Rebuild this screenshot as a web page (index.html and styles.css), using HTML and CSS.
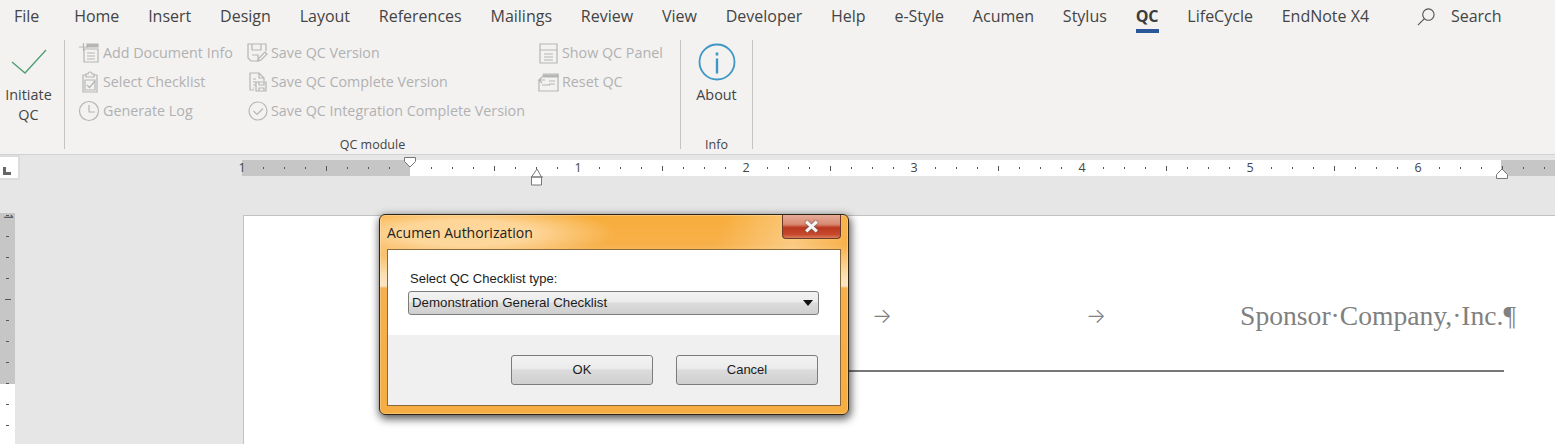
FILE: index.html
```html
<!DOCTYPE html>
<html lang="en">
<head>
<meta charset="utf-8">
<title>QC ribbon</title>
<link rel="stylesheet" href="styles.css">
</head>
<body>
<div class="app">
  <header class="ribbon">
    <nav class="tabs">
      <span class="tab tab-file">File</span>
      <span class="tab">Home</span>
      <span class="tab">Insert</span>
      <span class="tab">Design</span>
      <span class="tab">Layout</span>
      <span class="tab">References</span>
      <span class="tab">Mailings</span>
      <span class="tab">Review</span>
      <span class="tab">View</span>
      <span class="tab">Developer</span>
      <span class="tab">Help</span>
      <span class="tab">e-Style</span>
      <span class="tab">Acumen</span>
      <span class="tab">Stylus</span>
      <span class="tab tab-active">QC</span>
      <span class="tab">LifeCycle</span>
      <span class="tab">EndNote X4</span>
      <span class="search">
        <svg class="search-icon" viewBox="0 0 20 20"><circle cx="12" cy="8" r="6"/><path d="M7.800 12.300 1 19"/></svg>
        <span>Search</span>
      </span>
    </nav>
    <div class="groups">
      <section class="group group-initiate">
        <div class="big-btn">
          <svg class="check-icon" viewBox="0 0 36 26"><path d="M1 13 14 24 35 1"/></svg>
          <span>Initiate<br>QC</span>
        </div>
      </section>
      <section class="group group-module">
        <div class="columns">
          <div class="col col-a">
            <div class="item">
              <svg class="ico" viewBox="0 0 22 22"><path d="M1 5h9M5.500 1v8"/><path class="fill" d="M9 2h11v3H9z"/><path d="M6 7h14v13H6zM9 11h8M9 14h8M9 17h8"/></svg>
              <span>Add Document Info</span>
            </div>
            <div class="item">
              <svg class="ico" viewBox="0 0 22 22"><path d="M8 4H5v17h14V4h-3"/><path d="M8 5V3h2a1.500 1.500 0 0 1 4 0h2v3H8z"/><path d="M7 9h10v10H7zM9 14l2.500 2.500L17 10"/></svg>
              <span>Select Checklist</span>
            </div>
            <div class="item">
              <svg class="ico" viewBox="0 0 22 22"><circle cx="11" cy="11" r="9.500"/><path d="M11 5v7h6"/></svg>
              <span>Generate Log</span>
            </div>
          </div>
          <div class="col col-b">
            <div class="item">
              <svg class="ico" viewBox="0 0 22 22"><path d="M12 19H5l-3-3V2h18v7"/><path d="M6 2v6h9V2M6 13h6v6"/><path d="M12 19l1-3 6-6 2 2-6 6z"/></svg>
              <span>Save QC Version</span>
            </div>
            <div class="item">
              <svg class="ico" viewBox="0 0 22 22"><path d="M8 19H4V2h9l5 5v3"/><path d="M13 2v5h5"/><path d="M7 8h3M7 11h3M7 14h3M7 17h1"/><path d="M10 11h10v9H10zM13 11v3h5v-3M13 20v-3h5v3"/></svg>
              <span>Save QC Complete Version</span>
            </div>
            <div class="item">
              <svg class="ico" viewBox="0 0 22 22"><circle cx="12" cy="11" r="9"/><path d="M7.500 11l3.500 3.500 6-6"/></svg>
              <span>Save QC Integration Complete Version</span>
            </div>
          </div>
          <div class="col col-c">
            <div class="item">
              <svg class="ico" viewBox="0 0 22 22"><path d="M3 2h17v19H3zM3 8h17M7 12h9M7 15h9M7 18h9"/></svg>
              <span>Show QC Panel</span>
            </div>
            <div class="item">
              <svg class="ico" viewBox="0 0 22 22"><path d="M6 3h15v17H2V9"/><path class="fill" d="M6 4h15v2H6z"/><path d="M12 10h6M12 13h6M5 14h8M8 9H2l3-3M2 9l3 3"/></svg>
              <span>Reset QC</span>
            </div>
          </div>
        </div>
        <div class="group-label">QC module</div>
      </section>
      <section class="group group-info">
        <div class="big-btn">
          <svg class="info-icon" viewBox="0 0 38 38"><circle cx="19" cy="19" r="17.500"/><path class="info-dot" d="M19 9.500v3"/><path class="info-bar" d="M19 15.500v15"/></svg>
          <span>About</span>
        </div>
        <div class="group-label">Info</div>
      </section>
    </div>
  </header>

  <div class="ruler-row">
    <div class="corner"><span class="corner-mark"></span></div>
    <div class="ruler">
      <div class="inch"><span class="num">1</span><span class="ticks"></span></div>
      <div class="inch"><span class="num"></span><span class="ticks"></span></div>
      <div class="inch"><span class="num">1</span><span class="ticks"></span></div>
      <div class="inch"><span class="num">2</span><span class="ticks"></span></div>
      <div class="inch"><span class="num">3</span><span class="ticks"></span></div>
      <div class="inch"><span class="num">4</span><span class="ticks"></span></div>
      <div class="inch"><span class="num">5</span><span class="ticks"></span></div>
      <div class="inch inch-last"><span class="num">6</span><span class="ticks"></span></div>
      <svg class="marker marker-first" viewBox="0 0 12 11"><path d="M.5.500h11v4l-5.500 5.500-5.500-5.500z"/></svg>
      <svg class="marker marker-tab" viewBox="0 0 14 18"><path d="M1.500 9 7 1l4.500 8M1.500 9v8h10V9zM1 9h12"/></svg>
      <svg class="marker marker-right" viewBox="0 0 12 11"><path d="M.5 10.500v-4L6 1l5.500 5.500v4z"/></svg>
    </div>
  </div>

  <div class="workspace">
    <aside class="vruler"><span class="vnum">1</span></aside>
    <main class="page">
      <div class="doc-header">
        <span class="arrow arrow-one">→</span>
        <span class="arrow arrow-two">→</span>
        <span class="sponsor">Sponsor·Company,·Inc.¶</span>
      </div>
      <div class="doc-rule"></div>
    </main>
  </div>

  <div class="dialog">
    <div class="dialog-title">
      <span class="dialog-caption">Acumen Authorization</span>
      <span class="dialog-close">
        <svg class="close-x" viewBox="0 0 14 12"><path d="M2 1.500 12 10.500M12 1.500 2 10.500"/></svg>
      </span>
    </div>
    <div class="dialog-body">
      <div class="dialog-top">
        <div class="dialog-label">Select QC Checklist type:</div>
        <div class="combo">
          <span>Demonstration General Checklist</span>
          <span class="combo-arrow"></span>
        </div>
      </div>
      <div class="dialog-bottom">
        <span class="btn">OK</span>
        <span class="btn">Cancel</span>
      </div>
    </div>
  </div>
</div>
</body>
</html>
```

FILE: styles.css
```css
* { box-sizing: border-box; }
html, body { margin: 0; padding: 0; }
body {
  width: 1555px;
  height: 444px;
  overflow: hidden;
  background: #e6e6e6;
  font-family: "Open Sans", "Noto Sans", sans-serif;
}
.app {
  position: relative;
  width: 1555px;
  height: 444px;
  overflow: hidden;
  display: flex;
  flex-direction: column;
}

/* Ribbon */
.ribbon {
  height: 155px;
  background: #f3f2f1;
  border-bottom: 1px solid #d2d2d2;
  flex: none;
}
.tabs {
  height: 40px;
  display: flex;
  align-items: flex-start;
  gap: 28.8px;
  padding: 6px 0 0 14px;
  font-size: 16px;
  line-height: 21px;
  color: #444;
}
.tab { white-space: nowrap; }
.tab-file { margin-right: 6px; }
.tab-active {
  font-weight: 700;
  height: 27px;
  border-bottom: 4px solid #2b579a;
  color: #3c3c3c;
}
.search {
  display: flex;
  align-items: center;
  gap: 15px;
  margin-left: 19px;
  height: 21px;
}
.search-icon {
  width: 19px;
  height: 19px;
  fill: none;
  stroke: #555;
  stroke-width: 1.200;
}
.groups {
  display: flex;
  height: 114px;
}
.group {
  position: relative;
  border-right: 1px solid #c3c3c3;
  display: flex;
  flex-direction: column;
  height: 109px;
  flex: none;
}
.group-initiate { width: 65px; padding-right: 7px; }
.group-module { width: 616px; }
.group-info { width: 72px; }
.big-btn {
  display: flex;
  flex-direction: column;
  align-items: center;
  font-size: 14.400px;
  line-height: 20px;
  color: #444;
  text-align: center;
}
.group-initiate .big-btn { padding-top: 9px; }
.group-info .big-btn { flex: 1; padding-top: 3px; }
.check-icon {
  width: 36px;
  height: 26px;
  margin-bottom: 10px;
  fill: none;
  stroke: #4f9e6f;
  stroke-width: 1.300;
}
.info-icon {
  width: 38px;
  height: 38px;
  margin-bottom: 4px;
  fill: none;
  stroke: #3f97c6;
  stroke-width: 1.800;
}
.info-dot { stroke-width: 2.600; }
.info-bar { stroke-width: 2.400; }
.columns {
  flex: 1;
  display: flex;
  margin-top: -2px;
  padding: 0 0 0 13px;
}
.col {
  display: flex;
  flex-direction: column;
  flex: none;
}
.col-a { width: 168px; }
.col-b { width: 291px; }
.item {
  display: flex;
  align-items: center;
  gap: 3px;
  height: 29px;
  font-size: 14.300px;
  color: #b1b1b1;
  white-space: nowrap;
}
.ico {
  width: 22px;
  height: 22px;
  flex: none;
  fill: none;
  stroke: #b5b5b5;
  stroke-width: 1.200;
}
.ico .fill { fill: #b5b5b5; }
.group-label {
  font-size: 12.500px;
  line-height: 16px;
  height: 16px;
  margin-bottom: -4px;
  text-align: center;
  color: #444;
}

/* Horizontal ruler */
.ruler-row {
  height: 60px;
  flex: none;
  display: flex;
  align-items: flex-start;
}
.corner {
  width: 20px;
  height: 25px;
  flex: none;
  background: #fff;
  border: 2px solid #dcdcdc;
  border-left: 0;
  padding: 10px 0 0 3px;
}
.corner-mark {
  display: block;
  width: 8px;
  height: 8px;
  border-left: 3px solid #666;
  border-bottom: 3px solid #666;
}
.ruler {
  position: relative;
  display: flex;
  width: 1323px;
  height: 16px;
  margin: 5px 0 0 212px;
  font-family: "Open Sans", sans-serif;
  background: linear-gradient(to right, transparent 10px, #c6c6c6 10px, #c6c6c6 178px, #fff 178px, #fff 1269px, #c6c6c6 1269px);
}
.inch {
  display: flex;
  width: 168px;
  flex: none;
}
.inch-last { width: 147px; }
.num {
  width: 20px;
  flex: none;
  text-align: center;
  font-size: 12.500px;
  line-height: 16px;
  color: #444;
}
.ticks {
  flex: 1;
  background-image:
    linear-gradient(#555, #555),
    linear-gradient(to right, #555 1px, transparent 1px);
  background-size: 1px 5px, 21px 2px;
  background-position: 74px 6px, 11px 7px;
  background-repeat: no-repeat, repeat-x;
}
.marker {
  position: absolute;
  fill: #fff;
  stroke: #777;
  stroke-width: 1;
}
.marker-first { left: 172px; top: -3px; width: 12px; height: 11px; }
.marker-tab { left: 298px; top: 8px; width: 14px; height: 18px; }
.marker-right { left: 1264px; top: 8px; width: 12px; height: 11px; }

/* Workspace */
.workspace {
  flex: 1;
  display: flex;
  min-height: 0;
}
.vruler {
  width: 15px;
  flex: none;
  margin-top: -2px;
  position: relative;
  overflow: hidden;
  background-color: #fff;
  background-image:
    linear-gradient(#555, #555),
    linear-gradient(to bottom, #555 1px, transparent 1px),
    linear-gradient(#c6c6c6, #c6c6c6);
  background-size: 6px 1px, 3px 21px, 100% 171px;
  background-position: 5px 86px, 6px 23px, 0 0;
  background-repeat: no-repeat, repeat-y, no-repeat;
}
.vnum {
  display: block;
  width: 15px;
  font-size: 12px;
  line-height: 10px;
  text-align: center;
  color: #444;
  transform: translateY(-1px) rotate(90deg);
}
.page {
  width: 1312px;
  margin-left: 228px;
  flex: none;
  background: #fff;
  border-top: 1px solid #c2c2c2;
  border-left: 1px solid #c2c2c2;
  padding: 80px 51px 0 166px;
}
.doc-header {
  display: flex;
  align-items: center;
  height: 40px;
  color: #808080;
}
.arrow {
  font-family: "Inter", sans-serif;
  font-weight: 300;
  font-size: 21px;
  line-height: 40px;
  flex: none;
}
.arrow-one { margin-left: 462px; }
.arrow-two { margin-left: 194px; }
.sponsor {
  margin-left: auto;
  margin-right: -12px;
  font-family: "Liberation Serif", serif;
  font-size: 27.600px;
  line-height: 40px;
  white-space: nowrap;
}
.doc-rule {
  height: 2px;
  margin-top: 34px;
  background: #777;
}

/* Dialog */
.dialog {
  position: absolute;
  left: 379px;
  top: 214px;
  width: 470px;
  height: 201px;
  padding: 0 7px 8px 7px;
  border: 1px solid #2e2413;
  border-radius: 6px;
  display: flex;
  flex-direction: column;
  background:
    radial-gradient(ellipse 150px 28px at 85px 18px, rgba(255,224,175,.8) 45%, rgba(255,224,175,0) 100%) no-repeat,
    linear-gradient(105deg, rgba(255,255,255,0) 72%, rgba(255,235,200,.45) 88%, rgba(255,255,255,0) 100%) 0 0 / 100% 34px no-repeat,
    linear-gradient(to bottom, #f8ad3b 0, #f7b04a 30px, #fbdfae 60px, #fbe6c4 71px, #f6b04d 73px, #f6ad42 100%);
  box-shadow: 0 0 0 1px rgba(255,255,255,.25) inset, 1px 3px 8px 1px rgba(0,0,0,.65);
}
.dialog-title {
  height: 34px;
  flex: none;
  display: flex;
  justify-content: space-between;
  align-items: flex-start;
}
.dialog-caption {
  font-size: 14px;
  line-height: 20px;
  margin-top: 8px;
  color: #222;
}
.dialog-close {
  width: 59px;
  height: 24px;
  border: 1px solid #6e3b2b;
  border-top: 0;
  border-radius: 0 0 4px 4px;
  display: flex;
  align-items: center;
  justify-content: center;
  background: linear-gradient(to bottom, #e6ab98 0, #d98a72 40%, #b9381f 55%, #c8492e 85%, #d97c5e 100%);
}
.close-x {
  width: 15px;
  height: 13px;
  fill: none;
  stroke: #f4f4f4;
  stroke-width: 3;
  filter: drop-shadow(0 0 1px #555);
}
.dialog-body {
  flex: 1;
  display: flex;
  flex-direction: column;
  border: 1px solid #8a6a3a;
  font-family: "Liberation Sans", sans-serif;
  color: #1c1c1c;
}
.dialog-top {
  height: 85px;
  flex: none;
  background: #fff;
  padding: 21px 21px 0 20px;
}
.dialog-label {
  font-size: 13px;
  line-height: 16px;
  padding-left: 2px;
  margin-bottom: 4px;
}
.combo {
  height: 24px;
  display: flex;
  align-items: center;
  justify-content: space-between;
  padding: 0 4px 2px 3px;
  font-size: 13.300px;
  border: 1px solid #7c7c7c;
  border-radius: 3px;
  background: linear-gradient(to bottom, #f3f3f3 0, #ebebeb 45%, #dcdcdc 50%, #cfcfcf 100%);
}
.combo-arrow {
  width: 0;
  height: 0;
  margin-right: 1px;
  margin-top: 2px;
  border-left: 5px solid transparent;
  border-right: 5px solid transparent;
  border-top: 6px solid #111;
}
.dialog-bottom {
  flex: 1;
  background: #f0f0f0;
  display: flex;
  justify-content: flex-end;
  gap: 23px;
  padding: 20px 22px 0 0;
}
.btn {
  width: 142px;
  height: 30px;
  display: flex;
  align-items: center;
  justify-content: center;
  padding-bottom: 2px;
  font-size: 13px;
  border: 1px solid #7c7c7c;
  border-radius: 3px;
  background: linear-gradient(to bottom, #f3f3f3 0, #ebebeb 45%, #dcdcdc 50%, #cfcfcf 100%);
}
```
